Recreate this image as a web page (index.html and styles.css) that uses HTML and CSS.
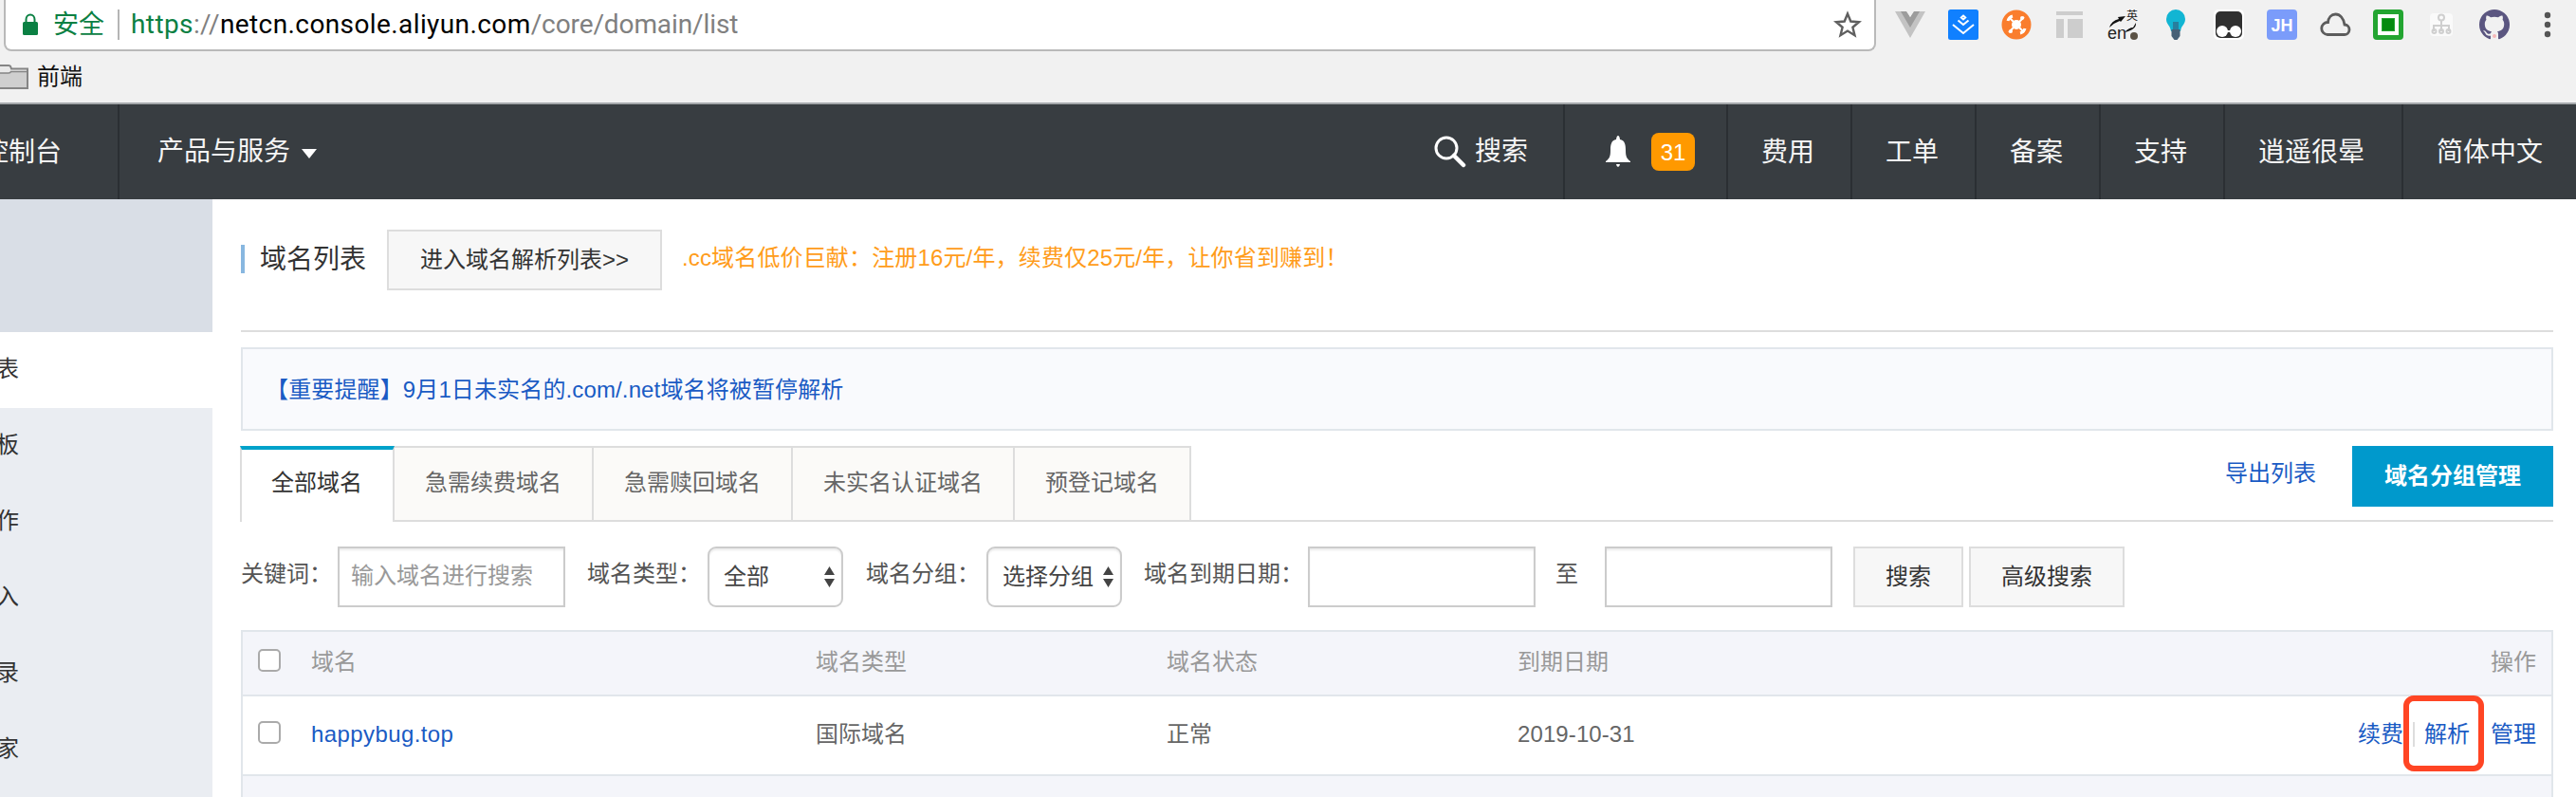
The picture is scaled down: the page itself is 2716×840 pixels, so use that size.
FILE: index.html
```html
<!DOCTYPE html>
<html lang="zh-CN">
<head>
<meta charset="utf-8">
<title>域名列表</title>
<link rel="stylesheet" href="styles.css">
</head>
<body>
<header class="browser">
  <div class="toolbar">
    <div class="address">
      <svg class="lock" width="18" height="24" viewBox="0 0 18 24"><path d="M4.500 11V6.500a4.500 5 0 0 1 9 0V11" fill="none" stroke="#0b8043" stroke-width="2"/><rect x="1" y="9" width="16" height="14" rx="1.500" fill="#0b8043"/></svg>
      <span class="secure">安全</span>
      <span class="url"><span class="url-scheme">https</span><span class="url-dim">://</span>netcn.console.aliyun.com<span class="url-dim url-path">/core/domain/list</span></span>
      <svg class="star" width="30" height="30" viewBox="0 0 30 30"><path d="M15 3.500l3.300 8 8.700.7-6.600 5.600 2.100 8.400L15 21.600l-7.500 4.600 2.100-8.400L3 12.200l8.700-.7z" fill="none" stroke="#5f5f5f" stroke-width="2.400"/></svg>
    </div>
    <div class="extensions">
      <svg viewBox="0 0 32 32"><path d="M0 2h12l4 7 4-7h12L16 30z" fill="#c3c3c3"/><path d="M6 2h7l3 6 3-6h7L16 19z" fill="#9c9c9c"/><path d="M12 2h8l-4 6z" fill="#f1f1f1"/></svg>
      <svg viewBox="0 0 32 32"><rect width="32" height="32" rx="2.500" fill="#1080ff"/><path d="M16 6.500l2.200 2-2.200 2-2.200-2zM10.500 11.500l5.500 4.500 5.500-4.500M5 16l11 9 11-9" fill="none" stroke="#fff" stroke-width="2"/></svg>
      <svg viewBox="0 0 32 32"><circle cx="16" cy="16" r="15.500" fill="#fa7d2d"/><path d="M8 8l16 16M24 8L8 24" stroke="#fff" stroke-width="2"/><circle cx="16" cy="16" r="5" fill="#fff"/><path d="M7 12q1-4 5-5M20 25q4-1 5-5" fill="none" stroke="#fff" stroke-width="3"/><circle cx="22" cy="9" r="2" fill="#fff"/><circle cx="10" cy="23" r="2" fill="#fff"/></svg>
      <svg viewBox="0 0 32 32"><path d="M2 2h28v4H2zM2 10h8v20H2zM14 10h16v20H14z" fill="#cdcdcd"/></svg>
      <svg viewBox="0 0 32 32"><text x="0" y="31" class="ext-en">en</text><text x="20" y="11" class="ext-zh">英</text><path d="M2 19Q4 12 12 10l-1-2 8-1-5 6-1-1Q7 14 2 19zM30 14q1 7-12 10 5-5 9-5z" fill="#111"/><circle cx="28" cy="28" r="4" fill="#5b5245"/></svg>
      <svg viewBox="0 0 32 32"><path d="M16 0a10 10 0 0 0-10 10c0 6 4 6 5 13h10c1-7 5-7 5-13A10 10 0 0 0 16 0z" fill="#12b5d3"/><path d="M13 13h6v8h-6z" fill="#277f9e"/><path d="M11.500 21h9v7l-3 4h-3l-3-4z" fill="#466076"/></svg>
      <svg viewBox="0 0 32 32"><rect width="32" height="32" rx="5" fill="#fff"/><rect x="2" y="2" width="28" height="28" rx="5" fill="#303030"/><circle cx="9" cy="23" r="6" fill="#fff"/><circle cx="23" cy="23" r="6" fill="#fff"/><path d="M14 22h4v2h-4z" fill="#fff"/></svg>
      <svg viewBox="0 0 32 32"><rect width="32" height="32" rx="4" fill="#7b9cfa"/><text x="16" y="23" class="ext-jh">JH</text></svg>
      <svg viewBox="0 0 32 32"><path d="M8 26.500h17.500a5 5 0 0 0 .5-10.500C25 9 21 5 16.500 5S9 8.500 8.500 13.500A6.500 6.500 0 0 0 8 26.500z" fill="none" stroke="#5c5c5c" stroke-width="2.800"/></svg>
      <svg viewBox="0 0 32 32"><rect width="32" height="32" rx="4" fill="#23a531"/><rect x="7" y="7" width="18" height="18" fill="#23a531" stroke="#fff" stroke-width="4"/><rect x="10" y="10" width="12" height="12" fill="#058a10"/></svg>
      <svg viewBox="0 0 32 32"><rect x="4" y="4" width="24" height="24" rx="4" fill="#fafafa"/><g fill="none" stroke="#cfcfcf" stroke-width="2"><circle cx="16" cy="8.500" r="3"/><path d="M16 12v11M8 23v-6h16v6"/><circle cx="8.500" cy="23" r="2"/><circle cx="16" cy="23" r="2"/><circle cx="23.500" cy="23" r="2"/></g></svg>
      <svg viewBox="0 0 16 16"><path fill="#5b5680" d="M8 0a8 8 0 0 0-2.530 15.590c.4.070.55-.17.55-.38v-1.490c-2.230.48-2.700-.95-2.700-.95-.36-.92-.89-1.170-.89-1.170-.73-.5.060-.49.060-.49.800.06 1.230.83 1.230.83.710 1.220 1.870.87 2.330.66.070-.52.280-.87.510-1.070-1.780-.2-3.650-.89-3.650-3.950 0-.87.310-1.590.82-2.150-.08-.2-.36-1.020.08-2.120 0 0 .67-.22 2.200.82a7.500 7.500 0 0 1 4 0c1.530-1.040 2.200-.82 2.200-.82.440 1.100.16 1.920.08 2.120.51.560.82 1.270.82 2.150 0 3.070-1.870 3.750-3.650 3.950.29.250.54.730.54 1.480v2.200c0 .21.150.46.550.38A8 8 0 0 0 8 0z"/><circle cx="8" cy="14" r="1" fill="#f6b8b8"/></svg>
      <svg viewBox="0 0 32 32"><g fill="#555"><circle cx="16" cy="6" r="3.200"/><circle cx="16" cy="16" r="3.200"/><circle cx="16" cy="26" r="3.200"/></g></svg>
    </div>
  </div>
  <div class="bookmarks">
    <svg width="31" height="28" viewBox="0 0 31 28"><path d="M-4 2H9q2 0 2.500 2l.5 1.500h17v20.500H-4z" fill="#e9e9e9" stroke="#858585" stroke-width="2"/><path d="M-4 10H10l2-2h16v17H-4z" fill="#cfcfcf"/><path d="M-4 10H9q2 0 2.500-1.500h17" fill="none" stroke="#858585" stroke-width="1.600"/></svg>
    <span>前端</span>
  </div>
</header>

<nav class="topnav">
  <div class="nav-console"><span>控制台</span></div>
  <div class="nav-products">产品与服务<i class="caret"></i></div>
  <div class="nav-search"><svg width="34" height="34" viewBox="0 0 34 34"><circle cx="13" cy="13" r="11" fill="none" stroke="#fff" stroke-width="3"/><path d="M21 21l10 10" stroke="#fff" stroke-width="4.500" stroke-linecap="round"/></svg>搜索</div>
  <div class="nav-bell"><svg width="26" height="34" viewBox="0 0 26 34"><path d="M13 0q1.500 0 2 4c5 1 6 5 6 11 0 7 1 9 5 12v1H0v-1c4-3 5-5 5-12 0-6 1-10 6-11q.5-4 2-4zM11 30h4q-.5 3-2 3t-2-3z" fill="#fff"/></svg><b class="badge">31</b></div>
  <div class="nav-item">费用</div>
  <div class="nav-item">工单</div>
  <div class="nav-item">备案</div>
  <div class="nav-item">支持</div>
  <div class="nav-item nav-user">逍遥很晕</div>
  <div class="nav-item nav-last">简体中文</div>
</nav>

<div class="body">
  <aside class="sidebar">
    <div class="side-head"></div>
    <div class="side-item side-active">表</div>
    <div class="side-item">板</div>
    <div class="side-item">作</div>
    <div class="side-item">入</div>
    <div class="side-item">录</div>
    <div class="side-item">家</div>
  </aside>
  <main class="main">
    <div class="title-row">
      <h1 class="title">域名列表</h1>
      <button class="btn">进入域名解析列表&gt;&gt;</button>
      <span class="promo">.cc域名低价巨献：注册16元/年，续费仅25元/年，让你省到赚到！</span>
    </div>
    <div class="notice">【重要提醒】9月1日未实名的.com/.net域名将被暂停解析</div>
    <div class="tabs">
      <div class="tab tab-active">全部域名</div>
      <div class="tab">急需续费域名</div>
      <div class="tab">急需赎回域名</div>
      <div class="tab">未实名认证域名</div>
      <div class="tab">预登记域名</div>
      <div class="tab-actions"><a class="link">导出列表</a><button class="primary">域名分组管理</button></div>
    </div>
    <div class="filters">
      <span class="label label-key">关键词：</span>
      <div class="field field-key">输入域名进行搜索</div>
      <span class="label label-type">域名类型：</span>
      <div class="select">全部<svg width="11" height="22" viewBox="0 0 11 22"><path d="M5.500 0L11 9H0zM5.500 22L11 13H0z" fill="#444"/></svg></div>
      <span class="label label-type">域名分组：</span>
      <div class="select">选择分组<svg width="11" height="22" viewBox="0 0 11 22"><path d="M5.500 0L11 9H0zM5.500 22L11 13H0z" fill="#444"/></svg></div>
      <span class="label label-date">域名到期日期：</span>
      <div class="field"></div>
      <span class="label label-to">至</span>
      <div class="field"></div>
      <button class="btn btn-search">搜索</button>
      <button class="btn btn-adv">高级搜索</button>
    </div>
    <div class="table">
      <div class="row row-head"><i class="check"></i><span>域名</span><span>域名类型</span><span>域名状态</span><span>到期日期</span><span class="ops">操作</span></div>
      <div class="row"><i class="check"></i><a class="link domain">happybug.top</a><span>国际域名</span><span>正常</span><span class="date">2019-10-31</span><span class="ops"><a class="link">续费</a><i class="sep"></i><a class="link marked">解析</a><i class="sep"></i><a class="link">管理</a></span></div>
      <div class="row-foot"></div>
    </div>
  </main>
</div>
</body>
</html>
```

FILE: styles.css
```css
*, *::before, *::after { box-sizing: border-box; }
body {
  margin: 0;
  width: 2716px;
  height: 840px;
  overflow: hidden;
  background: #fff;
  color: #555;
  font: 24px/36px "Liberation Sans", "Noto Sans CJK SC", sans-serif;
  white-space: nowrap;
}
i, b { font-style: normal; font-weight: normal; }
svg { display: block; flex: none; }
button { font: inherit; padding: 0; }

/* browser chrome */
.browser { height: 110px; background: #f1f1f1; border-bottom: 2px solid #a5a8ab; }
.toolbar { display: flex; height: 54px; }
.address {
  display: flex;
  align-items: center;
  width: 1974px;
  margin-left: 4px;
  padding: 0 13px 0 17px;
  background: #fff;
  border: 2px solid #b9b9b9;
  border-top: 0;
  border-radius: 0 0 8px 8px;
}
.secure {
  width: 70px;
  height: 32px;
  margin-left: 15px;
  border-right: 2px solid #b5b5b5;
  color: #0b8043;
  font-size: 27px;
  line-height: 32px;
}
.url { margin-left: 12px; color: #000; font-family: Roboto, sans-serif; font-size: 28px; letter-spacing: 0.400px; }
.url-scheme { color: #0b8043; }
.url-dim { color: #808080; }
.url-path { letter-spacing: -0.100px; }
.star { margin-left: auto; }
.extensions { display: flex; gap: 24px; padding: 10px 0 0 20px; }
.extensions svg { width: 32px; height: 32px; overflow: visible; }
.ext-en { font: 18px "Liberation Sans", sans-serif; fill: #222; }
.ext-zh { font: 12px "Noto Sans CJK SC", sans-serif; fill: #222; }
.ext-jh { font: bold 18px "Liberation Sans", sans-serif; fill: #fff; text-anchor: middle; }
.bookmarks { display: flex; gap: 8px; align-items: center; height: 54px; color: #111; }

/* console navigation */
.topnav {
  display: flex;
  height: 100px;
  background: #383d41;
  color: #f5f5f5;
  font-size: 28px;
  line-height: 102px;
}
.nav-console { display: flex; justify-content: flex-end; width: 126px; padding-right: 59px; border-right: 2px solid #2b2f33; overflow: hidden; }
.nav-products { display: flex; align-items: center; padding-left: 40px; }
.caret { margin: 3px 0 0 12px; border: 8px solid transparent; border-top: 10px solid #fff; border-bottom: 0; }
.nav-search { display: flex; align-items: center; gap: 9px; margin-left: auto; padding-right: 37px; }
.nav-bell { display: flex; align-items: center; gap: 22px; width: 172px; padding-left: 43px; border-left: 2px solid #2b2f33; }
.badge { width: 46px; height: 40px; border-radius: 8px; background: #ff9900; color: #fff; font-size: 24px; line-height: 41px; text-align: center; }
.nav-item { width: 131px; padding-left: 35px; border-left: 2px solid #2b2f33; }
.nav-user { width: 188px; }
.nav-last { width: 184px; }

/* layout */
.body { display: flex; height: 630px; }
.sidebar { width: 224px; background: #eaedf2; color: #333; overflow: hidden; }
.side-head { height: 140px; background: #d9dee6; }
.side-item { height: 80px; line-height: 78px; text-indent: -4px; }
.side-active { background: #fff; }
.main { width: 2438px; margin-left: 30px; }

.title-row { display: flex; height: 140px; padding-top: 32px; border-bottom: 2px solid #ddd; }
.title {
  width: 154px;
  height: 30px;
  margin: 16px 0 0;
  padding-left: 16px;
  border-left: 4px solid #88b7e0;
  color: #333;
  font-size: 28px;
  font-weight: normal;
  line-height: 31px;
}
.btn { width: 290px; height: 64px; border: 2px solid #ddd; background: #f7f7f7; color: #333; line-height: 60px; }
.promo { margin-left: 21px; color: #ff9c1a; line-height: 59px; letter-spacing: 0.150px; }

.notice {
  height: 88px;
  margin-top: 16px;
  padding-left: 24px;
  border: 2px solid #e1e6eb;
  background: #f9fafd;
  color: #1a5bc4;
  line-height: 86px;
  letter-spacing: 0.130px;
}
.link { color: #1a5bc4; }

.tabs { display: flex; height: 80px; margin-top: 16px; border-bottom: 2px solid #ddd; }
.tab {
  height: 78px;
  padding: 0 32px;
  border-top: 2px solid #ddd;
  border-right: 2px solid #ddd;
  background: #fbfaf8;
  color: #666;
  line-height: 74px;
}
.tab-active {
  height: 80px;
  margin-left: -1px;
  border-top: 4px solid #00a2ca;
  border-left: 2px solid #ddd;
  padding: 0 32px 0 31px;
  background: #fff;
  color: #333;
  line-height: 70px;
}
.tab-actions { display: flex; gap: 38px; margin-left: auto; line-height: 57px; }
.primary { width: 212px; height: 64px; border: 0; background: #0099cc; color: #fff; font-weight: bold; line-height: 62px; }

.filters { display: flex; padding-top: 26px; height: 114px; color: #555; }
.label { line-height: 57px; }
.label-key { width: 102px; }
.label-type { width: 127px; margin-left: 23px; }
.label-type + .select { margin-right: 1px; }
.label-date { width: 173px; margin-left: 22px; }
.label-to { width: 73px; padding-left: 21px; }
.field {
  width: 240px;
  height: 64px;
  border: 2px solid #ccc;
  box-shadow: inset 0 2px 2px rgba(0, 0, 0, 0.08);
}
.field-key { padding-left: 12px; color: #999; line-height: 58px; }
.select {
  display: flex;
  align-items: center;
  justify-content: space-between;
  width: 143px;
  height: 64px;
  padding: 0 7px 0 15px;
  border: 2px solid #ccc;
  border-radius: 9px;
  color: #444;
  box-shadow: inset 0 2px 2px rgba(0, 0, 0, 0.08);
}
.btn-search { width: 116px; margin-left: 22px; }
.btn-adv { width: 164px; margin-left: 6px; }

.table { border: 2px solid #e1e6eb; border-bottom: 0; }
.row {
  display: grid;
  grid-template-columns: 56px 532px 370px 370px 1fr auto;
  align-items: center;
  height: 84px;
  padding: 0 16px;
  border-bottom: 2px solid #e1e6eb;
  line-height: 78px;
  color: #666;
}
.row-head { height: 68px; background: #f4f5fa; color: #999; line-height: 62px; }
.row > span, .row > a { margin-bottom: 3px; }
.check { width: 24px; height: 24px; margin-bottom: 6px; border: 2px solid #aaa; border-radius: 5px; background: #fff; }
.domain { letter-spacing: 0.400px; }
.date { letter-spacing: 0.100px; }
.ops { display: flex; align-items: center; }
.sep { width: 2px; height: 26px; margin: 0 10px; background: #ddd; }
/* highlight frame drawn round the action */
.marked { position: relative; }
.marked::after {
  content: "";
  position: absolute;
  left: -22px;
  top: -2px;
  width: 85px;
  height: 80px;
  border: 6px solid #ff4524;
  border-radius: 11px;
}
.row-foot { height: 30px; background: #f4f5fa; }
```
